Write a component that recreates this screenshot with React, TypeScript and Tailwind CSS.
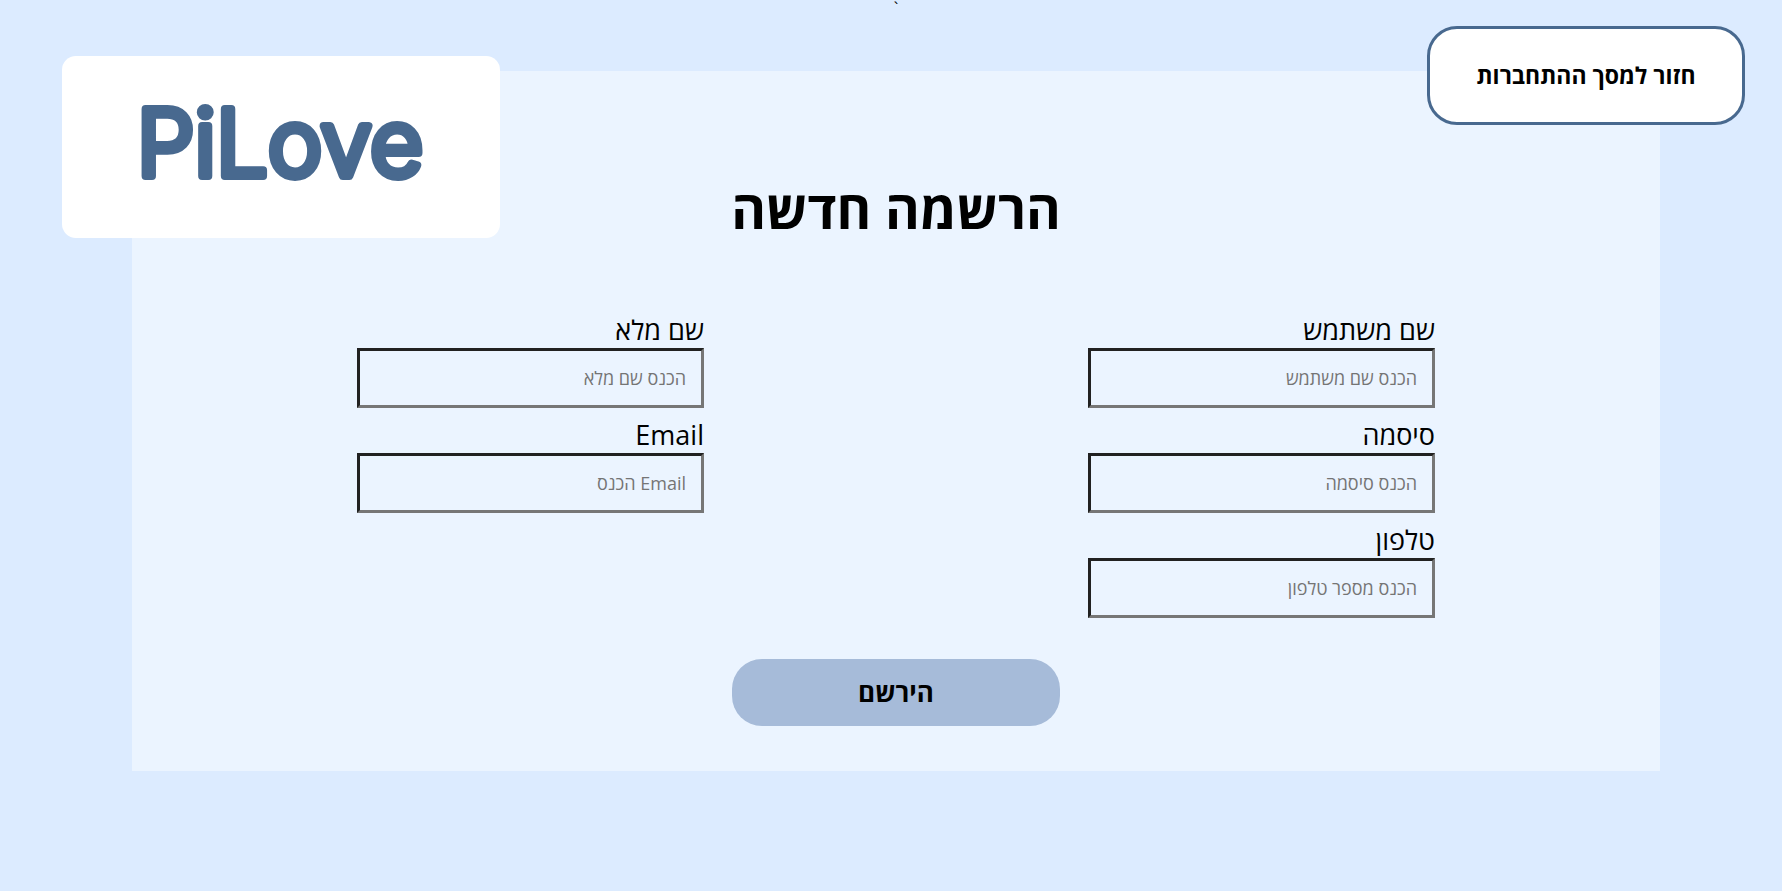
type FieldProps = {
  id: string;
  label: string;
  placeholder: string;
  type?: string;
};

function Field({ id, label, placeholder, type = "text" }: FieldProps) {
  return (
    <div className="flex flex-col">
      <label htmlFor={id} className="pb-px text-[27px] leading-[34px]">
        {label}
      </label>
      <input
        id={id}
        name={id}
        type={type}
        dir="rtl"
        placeholder={placeholder}
        className="h-[60px] w-full border-[3px] border-t-[#212121] border-r-[#767676] border-b-[#767676] border-l-[#212121] bg-transparent px-[15px] text-[18px] placeholder:text-[#757575]"
      />
    </div>
  );
}

function Logo() {
  return (
    <div className="absolute top-14 left-[62px] flex h-[182px] w-[438px] items-center justify-center rounded-[14px] bg-white">
      <svg viewBox="0 0 438 182" className="h-full w-full" role="img" aria-label="PiLove">
        <text
          x="218"
          y="120"
          textAnchor="middle"
          fontFamily="Inter, sans-serif"
          fontSize="92"
          fontWeight="270"
          fill="#48698f"
          stroke="#48698f"
          strokeWidth="8"
          strokeLinejoin="round"
          strokeLinecap="round"
        >
          PiLove
        </text>
      </svg>
    </div>
  );
}

export default function App() {
  return (
    <div
      dir="rtl"
      className="relative min-h-screen bg-[#dcebff] pr-[122px] pl-[132px] font-['Open_Sans','Noto_Sans',sans-serif] text-black"
    >
      <p className="h-[71px] text-center text-base leading-4">`</p>

      <main className="bg-[#ebf4ff] px-[225px] pt-[102px] pb-[45px]">
        <h1 className="text-center text-[53px] leading-[72px] font-bold">הרשמה חדשה</h1>
        <form onSubmit={(e) => e.preventDefault()}>
          <div className="mt-[68px] flex justify-between">
            <div className="flex w-[347px] flex-col gap-[10px]">
              <Field id="username" label="שם משתמש" placeholder="הכנס שם משתמש" />
              <Field id="password" label="סיסמה" placeholder="הכנס סיסמה" type="password" />
              <Field id="phone" label="טלפון" placeholder="הכנס מספר טלפון" type="tel" />
            </div>
            <div className="flex w-[347px] flex-col gap-[10px]">
              <Field id="fullname" label="שם מלא" placeholder="הכנס שם מלא" />
              <Field id="email" label="Email" placeholder="Email הכנס" type="email" />
            </div>
          </div>
          <button
            type="submit"
            className="mx-auto mt-[41px] block h-[67px] w-[328px] rounded-[30px] bg-[#a6bbd9] text-[26px] font-bold"
          >
            הירשם
          </button>
        </form>
      </main>

      <Logo />
      <button
        type="button"
        className="absolute top-[26px] right-[37px] h-[99px] w-[318px] rounded-[30px] border-[3px] border-[#48698f] bg-white text-[23px] font-bold"
      >
        חזור למסך ההתחברות
      </button>
    </div>
  );
}
